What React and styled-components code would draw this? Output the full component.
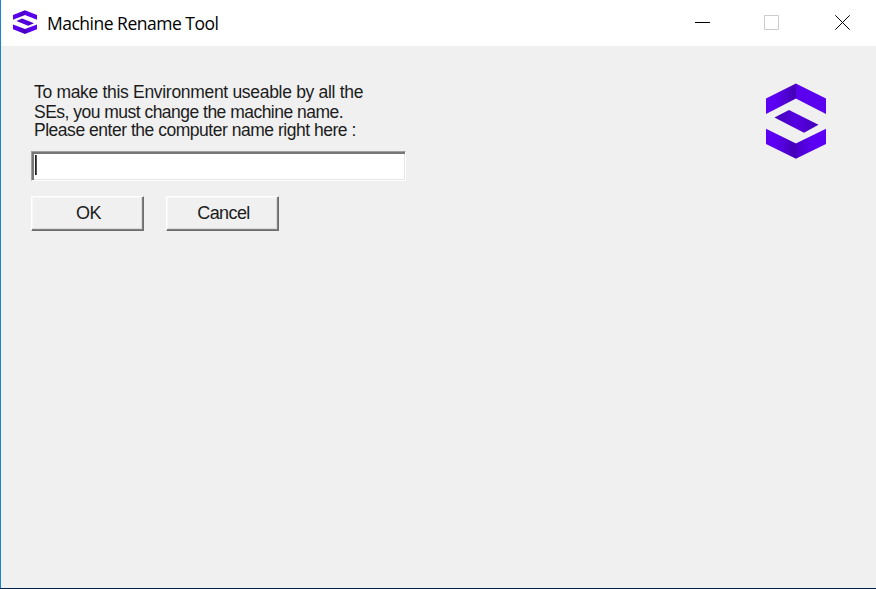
import React, { useId } from "react";
import styled, { createGlobalStyle } from "styled-components";

const GlobalStyle = createGlobalStyle`
  * { box-sizing: border-box; }
  body { margin: 0; background: #f0f0f0; }
`;

const Window = styled.div`
  display: flex;
  flex-direction: column;
  width: 876px;
  height: 589px;
  overflow: hidden;
  background: linear-gradient(#1883d7, #1883d7) left / 1px 100% no-repeat #f0f0f0;
  border-bottom: 1px solid #002050;
  padding-left: 1px;
`;

const TitleBar = styled.header`
  display: flex;
  align-items: flex-start;
  height: 46px;
  padding: 10px 26px 0 12px;
  background: #fff;
`;

const Title = styled.h1`
  flex: 1;
  margin: 0 0 0 10px;
  font: 400 17.5px/26px "Open Sans", "Noto Sans", sans-serif;
  letter-spacing: ${(p) => p.$tracking}px;
  color: #000;
  white-space: nowrap;
`;

const WindowControls = styled.div`
  display: flex;
  gap: 54px;
  padding-top: 5px;
`;

const ControlIcon = styled.svg`
  display: block;
  width: 15px;
  height: 15px;
  fill: none;
  stroke: ${(p) => p.$color || "#000"};
  margin-right: ${(p) => p.$after || 0}px;
`;

const Content = styled.main`
  display: flex;
  justify-content: space-between;
  flex: 1;
  padding: 37px 50px 0 30px;
`;

const Form = styled.form`
  width: 375px;
`;

const Message = styled.label`
  display: block;
  height: 68px;
  padding-left: 3px;
`;

const Line = styled.span`
  display: block;
  height: ${(p) => p.$height}px;
  font: 400 17.5px/19px "Liberation Sans", Arial, sans-serif;
  letter-spacing: ${(p) => p.$tracking}px;
  color: #1c1c1c;
  white-space: nowrap;
`;

const Field = styled.div`
  display: flex;
  width: 375px;
  height: 30px;
  padding: 3px;
  background: #fff;
  border: 1px solid #fff;
  border-top-color: #a0a0a0;
  border-left-color: #a0a0a0;
  box-shadow: inset 2px 2px 0 #777, inset -1px -1px 0 #e6e6e6;
`;

const Caret = styled.span`
  width: 2px;
  height: 20px;
  background: linear-gradient(90deg, #222 50%, #555 50%);
`;

const Actions = styled.div`
  display: flex;
  gap: 22px;
  margin-top: 15px;
`;

const Button = styled.button`
  width: 113px;
  height: 35px;
  padding: 0 0 1px 2px;
  background: #f0f0f0;
  border: 1px solid #fff;
  border-right-color: #6d6d6d;
  border-bottom-color: #6d6d6d;
  box-shadow: inset -1px -1px 0 #808080, inset -2px -2px 0 #dcdcdc,
    inset 1px 1px 0 #f8f8f8;
  font: 400 18px/20px "Liberation Sans", Arial, sans-serif;
  letter-spacing: -0.6px;
  color: #1c1c1c;
`;

const LogoSvg = styled.svg`
  display: block;
  flex: none;
  width: ${(p) => p.$w}px;
  height: ${(p) => p.$h}px;
`;

function Logo({ w, h }) {
  const id = useId().replace(/:/g, "");
  return (
    <LogoSvg $w={w} $h={h} viewBox="0 0 60 76" preserveAspectRatio="none">
      <defs>
        <linearGradient id={id + "l"}>
          <stop offset="0.3" stopColor="#5c00f5" />
          <stop offset="1" stopColor="#4300b2" />
        </linearGradient>
        <linearGradient id={id + "m"}>
          <stop offset="0" stopColor="#4300b4" />
          <stop offset="0.5" stopColor="#5600e4" />
          <stop offset="1" stopColor="#4300b4" />
        </linearGradient>
        <linearGradient id={id + "r"}>
          <stop offset="0" stopColor="#4b00c8" />
          <stop offset="0.6" stopColor="#5c00f5" />
        </linearGradient>
      </defs>
      <path d="M29.800 .5 60 15.500V31L29.800 15.500Z" fill="#5a00ef" />
      <path d="M0 15.500 30 .5V15.500L0 31Z" fill={`url(#${id}l)`} />
      <path d="M8.500 34.500 23 27 52.500 41.700 38 49.700Z" fill={`url(#${id}m)`} />
      <path d="M29.800 60.500 60 45.700V61L29.800 75.800Z" fill={`url(#${id}r)`} />
      <path d="M0 45.700 30 60.500V75.800L0 61Z" fill={`url(#${id}l)`} />
    </LogoSvg>
  );
}

export default function App() {
  return (
    <>
      <GlobalStyle />
      <Window>
        <TitleBar>
          <Logo w={24} h={24} />
          <Title $tracking={-0.5}>Machine Rename Tool</Title>
          <WindowControls>
            <ControlIcon><path d="M0 7.500H15" /></ControlIcon>
            <ControlIcon $color="#ccc" $after={2}><path d="M.5 .5H14.500V14.500H.5Z" /></ControlIcon>
            <ControlIcon><path d="M.3 .3 14.700 14.700M14.700 .3 .3 14.700" /></ControlIcon>
          </WindowControls>
        </TitleBar>
        <Content>
          <Form onSubmit={(e) => e.preventDefault()}>
            <Message>
              <Line $height={20} $tracking={-0.31}>To make this Environment useable by all the</Line>
              <Line $height={18} $tracking={-0.52}>SEs, you must change the machine name.</Line>
              <Line $height={19} $tracking={-0.48}>Please enter the computer name right here :</Line>
            </Message>
            <Field><Caret /></Field>
            <Actions>
              <Button type="button">OK</Button>
              <Button type="button">Cancel</Button>
            </Actions>
          </Form>
          <Logo w={60} h={76} />
        </Content>
      </Window>
    </>
  );
}
